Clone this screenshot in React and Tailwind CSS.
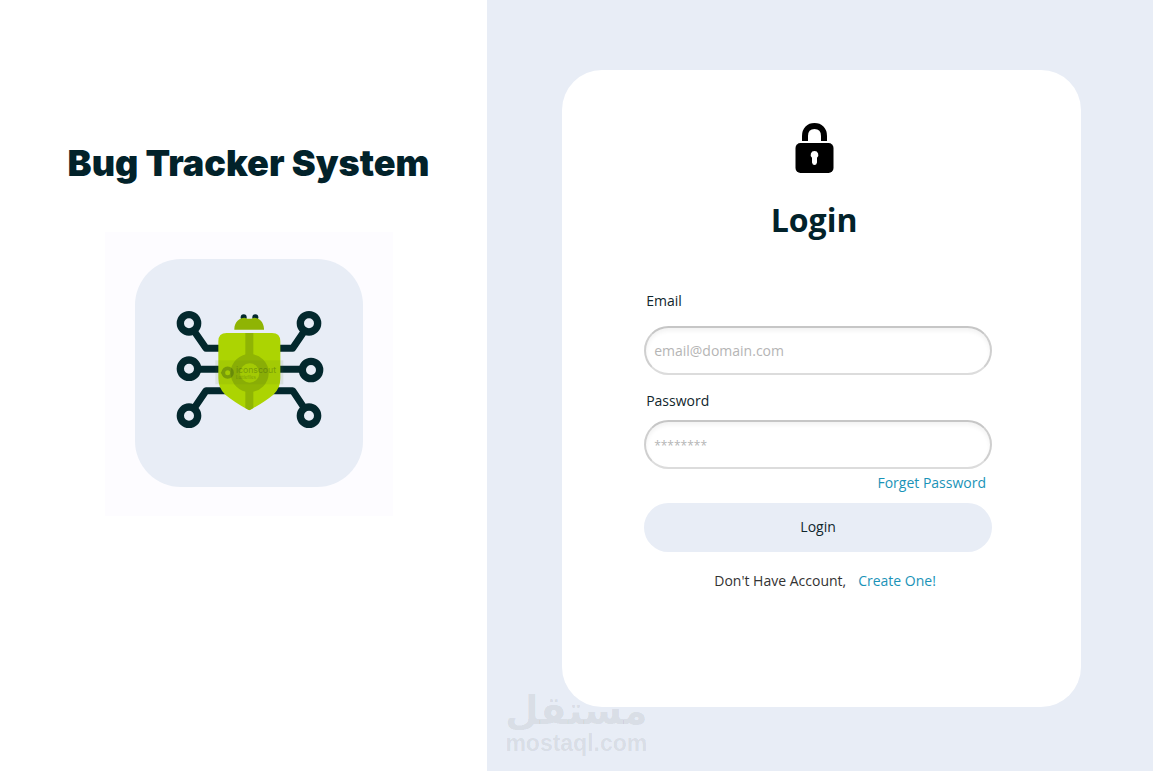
import { useState } from 'react';

function BugIcon() {
  return (
    <svg viewBox="-4 9 510 420" className="h-[140px] w-[170px]" aria-hidden="true">
      <g fill="none" stroke="#03282d" strokeWidth="21" strokeLinejoin="round">
        <path d="M71 71L122 145H180" />
        <path d="M432 71L382 145H320" />
        <path d="M71 208H180" />
        <path d="M320 208H436" />
        <path d="M71 347L122 272H200" />
        <path d="M432 347L382 272H310" />
      </g>
      <g fill="#e8edf6" stroke="#03282d" strokeWidth="22">
        <circle cx="71" cy="70" r="26" />
        <circle cx="431" cy="70" r="26" />
        <circle cx="71" cy="206" r="26" />
        <circle cx="437" cy="210" r="26" />
        <circle cx="71" cy="347" r="26" />
        <circle cx="431" cy="347" r="26" />
      </g>
      <circle cx="235" cy="52" r="9" fill="#03282d" />
      <circle cx="270" cy="52" r="9" fill="#03282d" />
      <path d="M207 89V86C208 66 222 53 238 53L246 56H258L266 53C282 53 295 66 296 86V89Z" fill="#8fb404" />
      <path
        d="M184 99H320Q345 99 345 124V235Q345 266 324 284Q300 304 258 328Q252 332 246 328Q204 304 180 284Q159 266 159 235V124Q159 99 184 99Z"
        fill="#acd402"
      />
      <path d="M240 99H264V324L252 331L240 324Z" fill="#8fb404" />
      <circle cx="253" cy="219" r="43" fill="#acd402" stroke="#8fb404" strokeWidth="28" />
      <rect x="150" y="181" width="204" height="72" fill="#5a7a20" fillOpacity="0.1" />
      <g opacity="0.35">
        <circle cx="187" cy="218" r="13" fill="none" stroke="#2c4a10" strokeWidth="11" />
        <path d="M166 218L178 204V232Z" fill="#2c4a10" />
        <text x="212" y="220" fontSize="26" fontFamily="Inter, sans-serif" fill="#2c4a10">iconscout</text>
        <text x="212" y="237" fontSize="13" fontFamily="Inter, sans-serif" fill="#2c4a10">Lottiefiles</text>
      </g>
    </svg>
  );
}

function LockIcon() {
  return (
    <svg viewBox="0 0 39 50" className="h-[50px] w-[39px]" aria-hidden="true">
      <path d="M10 18V13C10 6.500 14 3 19.500 3S29 6.500 29 13V18" fill="none" stroke="#000" strokeWidth="6" />
      <rect x="0.500" y="20" width="38" height="30" rx="5" fill="#000" />
      <path d="M19.500 28A3.800 3.800 0 0 1 22 34.700L22 39.500Q21.500 42 19.500 42T17 39.500L17 34.700A3.800 3.800 0 0 1 19.500 28Z" fill="#fff" />
    </svg>
  );
}

const inputClass =
  'h-[49px] w-full rounded-full border-2 border-[#dcdcdc] border-x-[#cfcfcf] border-t-[#c6c6c6] bg-white px-2 text-sm text-[#10262c] shadow-[inset_0_3px_4px_rgba(0,0,0,0.05)] outline-none placeholder:text-[#b5b5b5]';

export default function App() {
  const [email, setEmail] = useState('');
  const [password, setPassword] = useState('');

  const handleSubmit = (e) => {
    e.preventDefault();
  };

  return (
    <div className="relative flex min-h-screen bg-white font-['Open_Sans',sans-serif] text-sm text-[#10262c]">
      <section className="flex w-[42.25%] flex-col items-center pt-[138px] pl-2.5">
        <h1 className="whitespace-nowrap font-['Inter',sans-serif] text-[36px] leading-[50px] font-black text-[#02222a]">
          Bug Tracker System
        </h1>
        <div className="mt-11 bg-[#fdfcff] px-[30px] pt-[27px] pb-[29px]">
          <div className="flex size-[228px] items-center justify-center rounded-[46px] bg-[#e8edf6]">
            <BugIcon />
          </div>
        </div>
      </section>

      <main className="flex-1 bg-[#e8edf6] pt-[70px] pr-[72px] pb-16 pl-[75px]">
        <div className="rounded-[40px] bg-white pt-[53px] pr-[89px] pb-[116px] pl-[82px]">
          <div className="flex flex-col items-center pr-2">
            <LockIcon />
            <h2 className="mt-[27px] text-[32px] leading-10 font-bold text-[#02222a]">Login</h2>
          </div>

          <form onSubmit={handleSubmit} className="mt-[51px] flex flex-col">
            <label htmlFor="email" className="mb-[15px] ml-0.5 leading-5">Email</label>
            <input
              id="email"
              type="email"
              placeholder="email@domain.com"
              value={email}
              onChange={(e) => setEmail(e.target.value)}
              className={inputClass}
            />
            <label htmlFor="password" className="mt-4 mb-[9px] ml-0.5 leading-5">Password</label>
            <input
              id="password"
              type="password"
              placeholder="********"
              value={password}
              onChange={(e) => setPassword(e.target.value)}
              className={`${inputClass} placeholder:text-xs`}
            />
            <a href="#" className="mt-1 mr-1.5 self-end leading-5 text-[#1a93b8]">Forget Password</a>
            <button type="submit" className="mt-2.5 h-[49px] w-full rounded-full bg-[#e8edf6] pb-0.5">
              Login
            </button>
          </form>

          <p className="mt-[19px] flex justify-center gap-3 pl-3.5 leading-5 text-[#333]">
            Don't Have Account,
            <a href="#" className="text-[#1a93b8]">Create One!</a>
          </p>
        </div>
      </main>

      <div className="absolute bottom-4 left-[505px] flex flex-col items-center text-black/8" aria-hidden="true">
        <span dir="rtl" className="font-['DejaVu_Sans',sans-serif] text-[39px] leading-10 font-bold">مستقل</span>
        <span className="font-['Liberation_Sans',sans-serif] text-[23px] leading-6 font-bold">mostaql.com</span>
      </div>
    </div>
  );
}
